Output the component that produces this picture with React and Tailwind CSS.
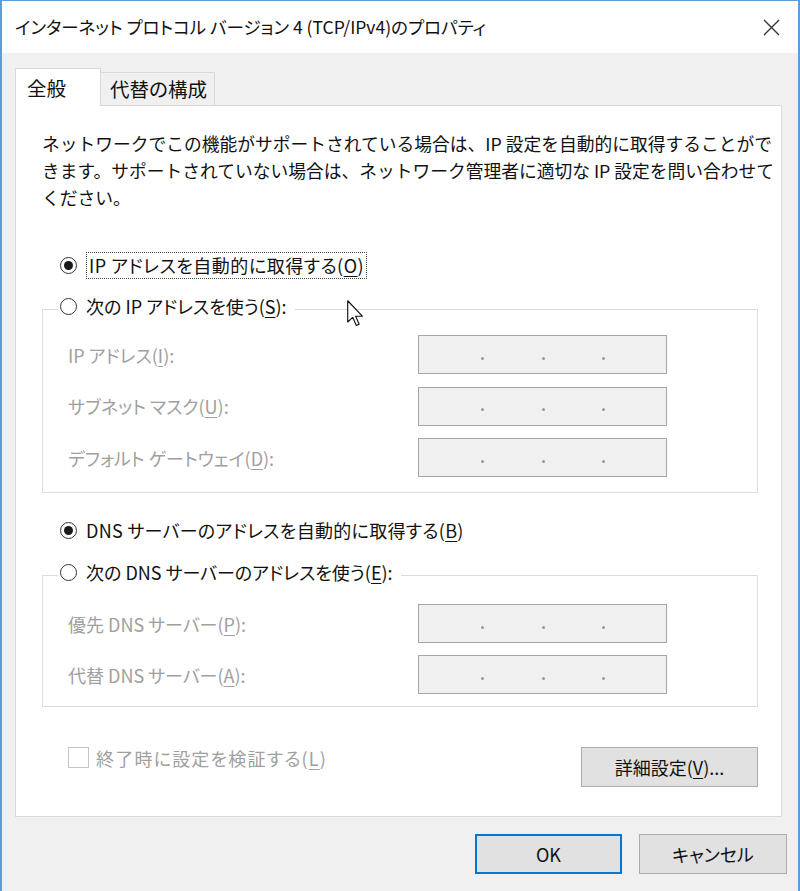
const font = "font-['Noto_Sans_CJK_JP','Noto_Sans',sans-serif] [font-feature-settings:'palt']"

function U({ children }) {
  return <span className="underline decoration-1 underline-offset-[3px]">{children}</span>
}

function Radio({ checked }) {
  return (
    <span className="flex h-[17px] w-[17px] shrink-0 items-center justify-center rounded-full border-[1.5px] border-[#333] bg-white">
      {checked && <span className="h-[9px] w-[9px] rounded-full bg-[#1a1a1a]" />}
    </span>
  )
}

function IpBox() {
  return (
    <div className="flex h-[39px] w-[249px] items-center border-[1.5px] border-[#a6a6a6] bg-[#f0f0f0] pl-[62px]">
      {[0, 1, 2].map(i => (
        <span key={i} className="mr-[57.5px] mt-[7px] h-[3px] w-[3px] rounded-full bg-[#9a9a9a]" />
      ))}
    </div>
  )
}

function Field({ label }) {
  return (
    <div className="grid grid-cols-[350px_249px] items-center">
      <span className="text-[#a0a0a0]">{label}</span>
      <IpBox />
    </div>
  )
}

function Cursor() {
  return (
    <svg className="absolute left-[345px] top-[299px]" width="17" height="27" viewBox="0 0 12 19">
      <path d="M0.5 0.5 L0.5 15.5 L4 12.2 L6.6 18 L8.6 17.1 L6.1 11.4 L10.8 11.4 Z" fill="#fff" stroke="#111" strokeWidth="0.8" strokeLinejoin="round" />
    </svg>
  )
}

export default function App() {
  return (
    <div className={`relative flex h-[891px] w-[800px] flex-col border-x-2 border-t border-[#5a9fdc] bg-[#f0f0f0] text-[18px] leading-none text-[#111] ${font}`}>
      {/* title bar */}
      <div className="flex h-[52px] shrink-0 items-center justify-between bg-white pl-[13px] pr-[18px]">
        <span className="whitespace-nowrap text-[17.5px]">インターネット プロトコル バージョン 4 (TCP/IPv4)のプロパティ</span>
        <svg width="17" height="17" viewBox="0 0 17 17">
          <path d="M1 1 L16 16 M16 1 L1 16" stroke="#333" strokeWidth="1.4" />
        </svg>
      </div>

      <div className="flex flex-1 flex-col pl-[13px] pr-[11px] pt-[15px]">
        {/* tabs */}
        <div className="flex items-end text-[19.5px]">
          <div className="relative z-10 -mb-px flex h-[38px] w-[86px] items-center border-x border-t border-[#d9d9d9] bg-white pl-[11px]">全般</div>
          <div className="flex h-[33px] w-[114px] items-center justify-center border-r border-t border-[#d9d9d9] bg-[#f0f0f0] pl-[2px]">代替の構成</div>
        </div>

        {/* panel */}
        <div className="flex w-[767px] flex-col border border-[#d9d9d9] bg-white pb-[29px] pl-[26px] pr-[23px] pt-[24px]">
          <p className="whitespace-nowrap text-[17.75px] leading-[27px] [font-feature-settings:normal]">
            ネットワークでこの機能がサポートされている場合は、IP 設定を自動的に取得することがで<br />
            きます。サポートされていない場合は、ネットワーク管理者に適切な IP 設定を問い合わせて<br />
            ください。
          </p>

          <div className="mt-[40px] flex h-[28px] items-center gap-[9px] pl-[18px]">
            <Radio checked />
            <span className="flex h-[27px] items-center border border-dotted border-[#444] px-[2px] tracking-[0.5px]">IP アドレスを自動的に取得する(<U>O</U>)</span>
          </div>

          <fieldset className="mt-[16px] border border-[#dcdcdc]">
            <legend className="ml-[15px] flex h-[28px] items-center gap-[9px] pb-[6px] pl-[2px] pr-[8px]">
              <Radio />
              <span>次の IP アドレスを使う(<U>S</U>):</span>
            </legend>
            <div className="flex flex-col gap-[12.5px] pb-[15px] pl-[25px] pt-[12px]">
              <Field label={<>IP アドレス(<U>I</U>):</>} />
              <Field label={<>サブネット マスク(<U>U</U>):</>} />
              <Field label={<>デフォルト ゲートウェイ(<U>D</U>):</>} />
            </div>
          </fieldset>

          <div className="mt-[23px] flex h-[28px] items-center gap-[9px] pl-[18px]">
            <Radio checked />
            <span className="tracking-[0.3px]">DNS サーバーのアドレスを自動的に取得する(<U>B</U>)</span>
          </div>

          <fieldset className="mt-[17px] border border-[#dcdcdc]">
            <legend className="ml-[15px] flex h-[28px] items-center gap-[9px] pb-[6px] pl-[2px] pr-[8px]">
              <Radio />
              <span>次の DNS サーバーのアドレスを使う(<U>E</U>):</span>
            </legend>
            <div className="flex flex-col gap-[12px] pb-[12px] pl-[25px] pt-[15px]">
              <Field label={<>優先 DNS サーバー(<U>P</U>):</>} />
              <Field label={<>代替 DNS サーバー(<U>A</U>):</>} />
            </div>
          </fieldset>

          <div className="mt-[40px] flex items-start justify-between pl-[26px]">
            <div className="flex h-[21px] items-center gap-[7px] text-[#a0a0a0]">
              <span className="h-[21px] w-[21px] border-[1.5px] border-[#c4c4c4] bg-white" />
              <span className="tracking-[1.2px]">終了時に設定を検証する(<U>L</U>)</span>
            </div>
            <button className="flex h-[40px] w-[177px] items-center justify-center border-[1.5px] border-[#adadad] bg-[#e1e1e1]">
              詳細設定(<U>V</U>)...
            </button>
          </div>
        </div>

        {/* dialog buttons */}
        <div className="mt-[17px] flex justify-end gap-[17px]">
          <button className="flex h-[40px] w-[147px] items-center justify-center border-2 border-[#0078d7] bg-[#e1e1e1]">OK</button>
          <button className="flex h-[40px] w-[148px] items-center justify-center border-[1.5px] border-[#adadad] bg-[#e1e1e1]">キャンセル</button>
        </div>
      </div>

      <Cursor />
    </div>
  )
}
